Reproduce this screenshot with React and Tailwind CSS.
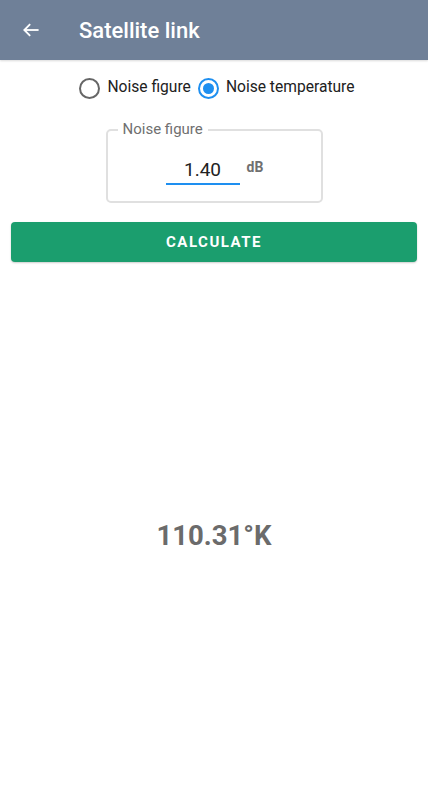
import React from "react";

export default function App() {
  return (
    <div className="w-[428px] h-[800px] bg-white flex flex-col" style={{ fontFamily: "Roboto, 'Liberation Sans', sans-serif" }}>
      <div className="h-[60px] bg-[#6f8098] flex items-center shrink-0 shadow-[0_1px_2px_rgba(0,0,0,0.15)]">
        <svg width="20" height="20" viewBox="0 0 24 24" className="ml-[21px]" fill="none" stroke="white" strokeWidth="2.2" strokeLinecap="square">
          <path d="M20 12H5" />
          <path d="M11 5l-7 7 7 7" strokeLinecap="butt" />
        </svg>
        <div className="ml-[38px] text-white text-[22px] font-medium">Satellite link</div>
      </div>
      <div className="flex items-center justify-center mt-[17px] h-[22px] text-[15.6px] text-[#212121]">
        <div className="flex items-center ml-[6px]">
          <div className="w-[21px] h-[21px] rounded-full border-2 border-[#666]" />
          <span className="ml-[7px]">Noise figure</span>
        </div>
        <div className="flex items-center ml-[7px]">
          <div className="w-[21px] h-[21px] rounded-full border-2 border-[#1e8ff0] flex items-center justify-center">
            <div className="w-[11px] h-[11px] rounded-full bg-[#1e8ff0]" />
          </div>
          <span className="ml-[7px]">Noise temperature</span>
        </div>
      </div>
      <div className="flex justify-center mt-[30px]">
        <div className="relative w-[217px] h-[74px] border-2 border-[#e0e0e0] rounded-[5px]">
          <div className="absolute left-[10px] top-[-12px] bg-white px-[5px] text-[15px] text-[#707070] leading-[20px]">Noise figure</div>
          <div className="absolute left-[58px] top-[24px] w-[74px] h-[30px] border-b-2 border-[#1e8ff0] text-center text-[19px] text-[#222] leading-[30px]">1.40</div>
          <div className="absolute left-[139px] top-[26px] text-[14px] font-bold text-[#707070]">dB</div>
        </div>
      </div>
      <div className="mx-[11px] mt-[19px] h-[40px] rounded-[4px] bg-[#1b9e6e] flex items-center justify-center text-white font-bold text-[15px] tracking-[1.5px] shadow-[0_1px_2px_rgba(0,0,0,0.2)]">
        CALCULATE
      </div>
      <div className="flex-1 flex items-center justify-center">
        <div className="text-[27.5px] font-bold text-[#6b6b6b] mt-[10px]">110.31°K</div>
      </div>
    </div>
  );
}
